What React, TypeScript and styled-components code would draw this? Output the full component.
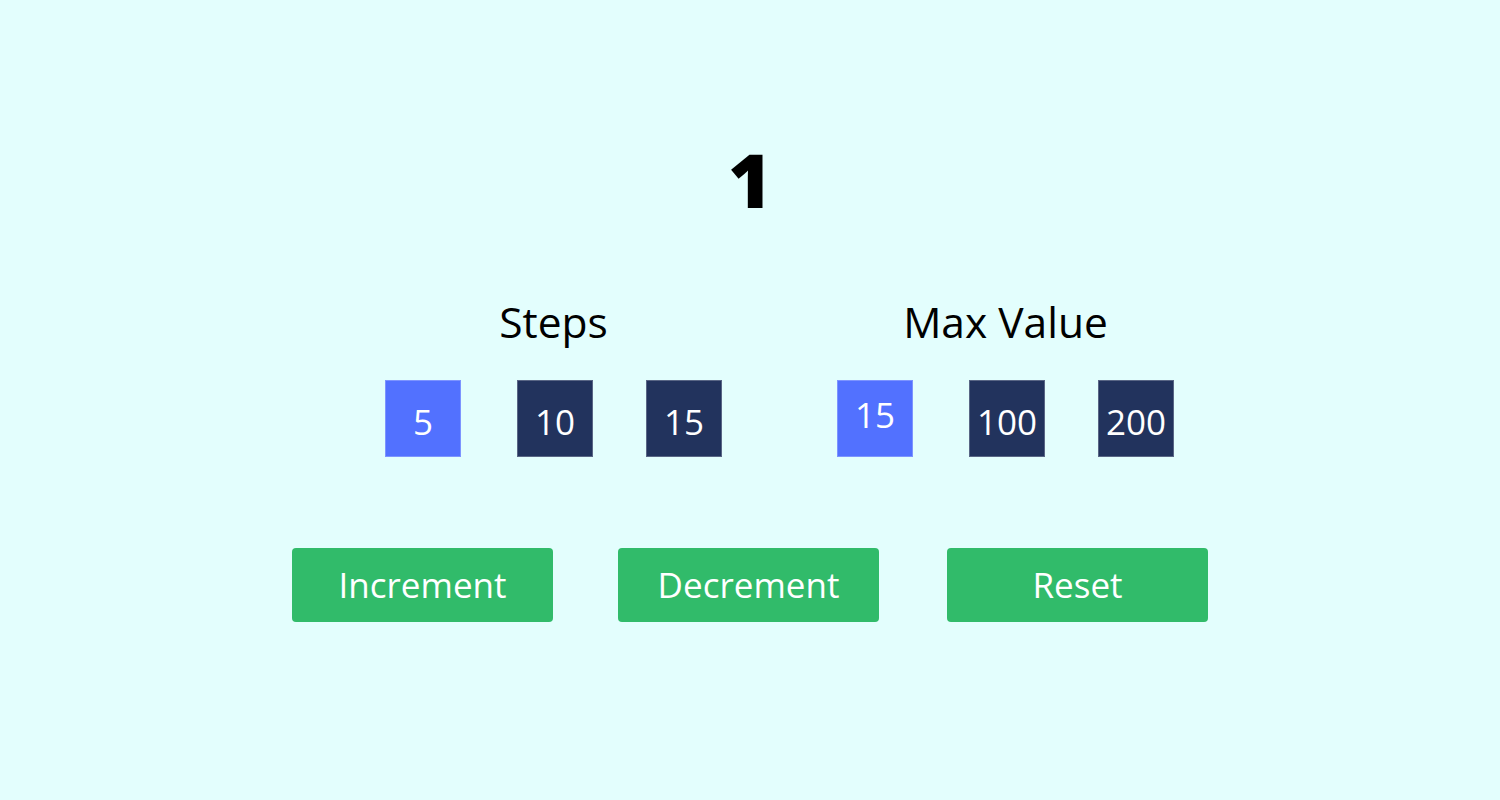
import React, { useState } from "react";
import styled, { createGlobalStyle } from "styled-components";

const GlobalStyle = createGlobalStyle`
  html, body {
    margin: 0;
    padding: 0;
    background: #e3fefd;
    font-family: "Open Sans", "Liberation Sans", sans-serif;
  }
`;

const Page = styled.div`
  width: 1500px;
  height: 800px;
  display: flex;
  flex-direction: column;
  align-items: center;
  background: #e3fefd;
`;

const Counter = styled.h1`
  margin: 142px 0 0;
  font-size: 75px;
  line-height: 1;
  font-weight: 800;
  color: #000;
`;

const OptionsRow = styled.div`
  display: flex;
  margin-top: 84px;
  margin-left: 59px;
  gap: 115px;
`;

const Group = styled.div`
  display: flex;
  flex-direction: column;
  align-items: center;
`;

const Label = styled.h2`
  margin: 0;
  font-size: 42.5px;
  line-height: 1;
  font-weight: 400;
  color: #000;
`;

const BoxRow = styled.div`
  display: flex;
  margin-top: 36px;
  & > :nth-child(2) {
    margin-left: 56px;
  }
  & > :nth-child(3) {
    margin-left: 53px;
  }
`;

const Box = styled.button<{ $active: boolean; $raised?: boolean }>`
  box-sizing: border-box;
  width: 76px;
  height: 77px;
  display: flex;
  align-items: center;
  justify-content: center;
  padding: ${(p) => (p.$raised ? "0 0 8px" : "6px 0 0")};
  border: 1px solid rgba(255, 255, 255, 0.25);
  background: ${(p) => (p.$active ? "#5271ff" : "#22335d")};
  color: #fff;
  font-family: "Open Sans", "Liberation Sans", sans-serif;
  font-size: 35px;
  line-height: 1;
  cursor: pointer;
`;

const ButtonRow = styled.div`
  display: flex;
  margin-top: 91px;
  & > :nth-child(2) {
    margin-left: 65px;
  }
  & > :nth-child(3) {
    margin-left: 68px;
  }
`;

const ActionButton = styled.button`
  width: 261px;
  height: 74px;
  border: none;
  border-radius: 4px;
  background: #31bb6a;
  color: #fff;
  font-family: "Open Sans", "Liberation Sans", sans-serif;
  font-size: 35px;
  line-height: 1;
  padding: 0;
  cursor: pointer;
`;

export default function App() {
  const [count, setCount] = useState(1);
  const [step, setStep] = useState(5);
  const [max, setMax] = useState(15);

  return (
    <>
      <GlobalStyle />
      <Page>
        <Counter>{count}</Counter>
        <OptionsRow>
          <Group>
            <Label>Steps</Label>
            <BoxRow>
              {[5, 10, 15].map((v) => (
                <Box key={v} $active={step === v} onClick={() => setStep(v)}>
                  {v}
                </Box>
              ))}
            </BoxRow>
          </Group>
          <Group>
            <Label>Max Value</Label>
            <BoxRow>
              {[15, 100, 200].map((v) => (
                <Box
                  key={v}
                  $active={max === v}
                  $raised={max === v}
                  onClick={() => setMax(v)}
                >
                  {v}
                </Box>
              ))}
            </BoxRow>
          </Group>
        </OptionsRow>
        <ButtonRow>
          <ActionButton onClick={() => setCount((c) => Math.min(max, c + step))}>
            Increment
          </ActionButton>
          <ActionButton onClick={() => setCount((c) => Math.max(0, c - step))}>
            Decrement
          </ActionButton>
          <ActionButton onClick={() => setCount(0)}>Reset</ActionButton>
        </ButtonRow>
      </Page>
    </>
  );
}
